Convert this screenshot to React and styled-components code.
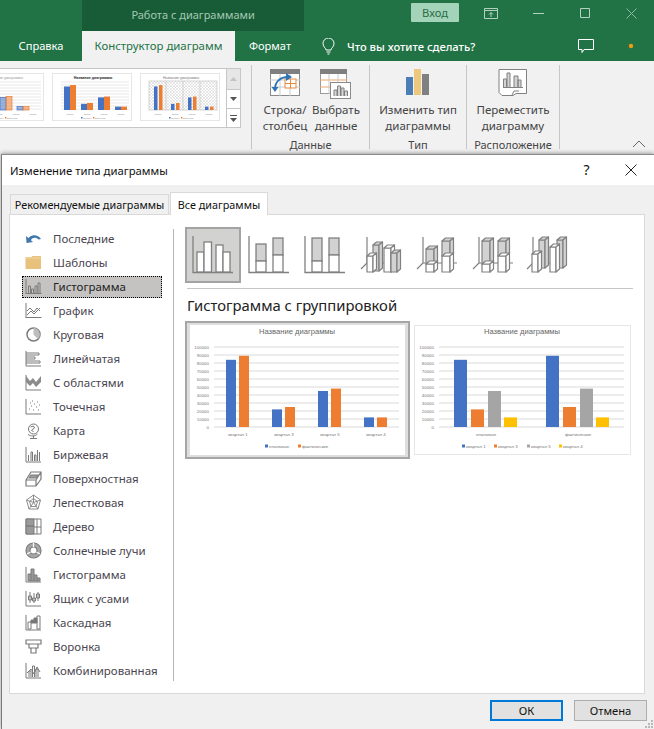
import React from 'react'
import styled, { createGlobalStyle } from 'styled-components'

const GlobalStyle = createGlobalStyle`
    html, body {
        margin: 0;
        padding: 0;
        background: #f0f0f0;
    }
    * {
        box-sizing: border-box;
    }
`

const Page = styled.div`
    width: 654px;
    height: 729px;
    overflow: hidden;
    display: flex;
    flex-direction: column;
    font-family: "Noto Sans", "Open Sans", sans-serif;
    font-size: 11.5px;
    color: #444;
`

const TitleBar = styled.div`
    height: 31px;
    flex: none;
    background: #217346;
    display: flex;
    align-items: stretch;
`

const ContextTitle = styled.div`
    width: 223px;
    margin-left: 82px;
    background: #185c37;
    color: #a5c9b4;
    font-size: 11px;
    display: flex;
    align-items: center;
    justify-content: center;
    padding-bottom: 3px;
`

const LoginButton = styled.div`
    width: 48px;
    height: 19px;
    margin: 3px 0 0 107px;
    background: #a3d3b8;
    color: #2b6b47;
    font-size: 11.200px;
    border-radius: 1px;
    display: flex;
    align-items: center;
    justify-content: center;
`

const WindowButtons = styled.div`
    display: flex;
    align-items: flex-start;
    margin-left: 20px;
`

const WindowButton = styled.div`
    width: ${p => p.$w}px;
    height: 26px;
    margin-right: ${p => p.$after || 0}px;
    display: flex;
    align-items: center;
    justify-content: center;
`

const TabRow = styled.div`
    height: 30px;
    flex: none;
    background: #217346;
    display: flex;
    align-items: stretch;
    color: #fff;
`

const RibbonTab = styled.div`
    display: flex;
    align-items: center;
    justify-content: center;
    width: ${p => p.$w}px;
    padding-bottom: 1px;
    background: ${p => (p.$active ? '#f1f1f1' : 'transparent')};
    color: ${p => (p.$active ? '#217346' : '#fff')};
    font-size: ${p => (p.$active ? 11.4 : 11.1)}px;
`

const TellMe = styled.div`
    display: flex;
    align-items: center;
    gap: 12px;
    margin-left: 17px;
    width: 230px;
    color: #fff;
    font-size: 11.200px;
    font-weight: 500;
`

const TabRight = styled.div`
    display: flex;
    align-items: center;
    gap: 35px;
    margin-left: 26px;
`

const OrangeDot = styled.span`
    width: 4px;
    height: 4px;
    border-radius: 50%;
    background: #f29b11;
    box-shadow: 0 0 1px #f29b11;
`

const Ribbon = styled.div`
    height: 93px;
    flex: none;
    background: #f1f1f1;
    display: flex;
    align-items: flex-start;
    position: relative;
`

const GalleryArea = styled.div`
    width: 251px;
    flex: none;
    padding-top: 7px;
`

const Gallery = styled.div`
    width: 241px;
    height: 60px;
    display: flex;
    background: #fff;
    border: 1px solid #c6c6c6;
    border-left: 0;
`

const ThumbStrip = styled.div`
    flex: 1;
    overflow: hidden;
    display: flex;
    gap: 8px;
    padding-top: 4px;
`

const ThumbFrame = styled.div`
    flex: none;
    width: 80px;
    height: 48px;
    margin-left: ${p => p.$shift || 0}px;
    border: 1px solid #e6e6e6;
    background: #fff;

    svg {
        display: block;
        width: 100%;
        height: 100%;
    }
`

const GalleryScroll = styled.div`
    width: 14px;
    flex: none;
    display: flex;
    flex-direction: column;
    border-left: 1px solid #c6c6c6;
`

const ScrollButton = styled.div`
    flex: ${p => p.$grow || 1};
    background: ${p => (p.$disabled ? '#e6e6e6' : '#fff')};
    border-bottom: ${p => (p.$last ? '0' : '1px solid #c6c6c6')};
    display: flex;
    align-items: center;
    justify-content: center;
`

const Group = styled.div`
    width: ${p => p.$w}px;
    height: 84px;
    margin-top: 4px;
    flex: none;
    border-left: ${p => (p.$first ? '1px solid #c6c6c6' : '0')};
    border-right: 1px solid #c6c6c6;
    display: flex;
    flex-direction: column;
    align-items: center;
`

const GroupButtons = styled.div`
    height: 72px;
    flex: none;
    display: flex;
`

const BigButton = styled.div`
    width: ${p => p.$w}px;
    display: flex;
    flex-direction: column;
    align-items: center;
    text-align: center;
    line-height: 16px;
    white-space: nowrap;
`

const BigIcon = styled.div`
    height: 37px;
    padding-top: 4px;
    flex: none;
`

const GroupLabel = styled.div`
    flex: none;
    font-size: 11px;
    line-height: 16px;
    white-space: nowrap;
`

const Collapse = styled.div`
    position: absolute;
    right: 8px;
    bottom: 6px;
    line-height: 0;
`

const Dialog = styled.div`
    flex: 1;
    margin-left: 1px;
    position: relative;
    background: #f0f0f0;
    border-left: 1px solid #7a7a7a;
    border-top: 1px solid #8a8a8a;
    box-shadow: 0 -1px 4px rgba(0, 0, 0, 0.35);
    display: flex;
    flex-direction: column;
`

const DialogHead = styled.div`
    height: 30px;
    flex: none;
    background: #fff;
    display: flex;
    align-items: center;
    padding: 0 17px 0 8px;
    color: #111;
    font-size: 11.300px;
`

const DialogTitle = styled.div`
    flex: 1;
`

const HeadButton = styled.div`
    width: 45px;
    margin-right: 16px;
    text-align: center;
    font-size: 14px;
    line-height: 1;
`

const Tabs = styled.div`
    height: 29px;
    flex: none;
    padding: 6px 0 0 8px;
    display: flex;
    align-items: flex-end;
    gap: 1px;
`

const DialogTab = styled.div`
    width: ${p => p.$w}px;
    height: ${p => (p.$active ? 23 : 21)}px;
    margin-bottom: -1px;
    background: ${p => (p.$active ? '#fff' : '#f0f0f0')};
    border: 1px solid #d9d9d9;
    border-bottom: ${p => (p.$active ? '0' : '1px solid #d9d9d9')};
    display: flex;
    align-items: center;
    justify-content: center;
    color: #111;
    font-size: 10.800px;
    white-space: nowrap;
    position: relative;
    z-index: ${p => (p.$active ? 1 : 0)};
`

const Panel = styled.div`
    width: 636px;
    height: 480px;
    flex: none;
    margin-left: 7px;
    background: #fff;
    border: 1px solid #d9d9d9;
    display: flex;
`

const Sidebar = styled.div`
    width: 164px;
    height: 452px;
    margin: 14px 0 0 0;
    flex: none;
    border-right: 1px solid #b5b5b5;
    padding: 0 11px 0 12px;
`

const TypeList = styled.div`
    margin-top: -2px;
`

const TypeRow = styled.div`
    height: 24px;
    display: flex;
    align-items: center;
    gap: 11px;
    padding-left: 3px;
    color: ${p => (p.$selected ? '#222' : '#4a4650')};
    position: relative;

    &::before {
        content: '';
        display: ${p => (p.$selected ? 'block' : 'none')};
        position: absolute;
        left: 0;
        right: 0;
        top: 1px;
        bottom: 1px;
        background: #c5c3c1;
        border: 1px dotted #000;
        outline: 1px dotted #fff;
    }

    svg, span {
        position: relative;
    }

    span {
        padding-bottom: 2px;
    }

    svg {
        margin-top: -2px;
    }
`

const Content = styled.div`
    flex: 1;
    padding: 12px 0 0 11px;
`

const VariantRow = styled.div`
    display: flex;
`

const Variant = styled.div`
    width: 56px;
    height: 56px;
    background: ${p => (p.$selected ? '#d2d2d0' : 'transparent')};
    border: 2px solid ${p => (p.$selected ? '#a3a3a3' : 'transparent')};
    line-height: 0;

    svg {
        margin: -2px;
    }
`

const Rule = styled.div`
    width: 446px;
    height: 1px;
    margin: 5px 0 0 2px;
    background: #c6c6c6;
`

const Heading = styled.div`
    margin: 6px 0 0 2px;
    font-size: 14.800px;
    line-height: 20px;
    color: #222;
`

const Previews = styled.div`
    display: flex;
    align-items: center;
    margin-top: 6px;
    gap: 4px;
`

const PreviewSelected = styled.div`
    flex: none;
    width: 225px;
    height: 138px;
    padding: 2px;
    background: #dedede;
    border: 2px solid #a6a6a6;
    display: flex;
    align-items: center;
    justify-content: center;

    svg {
        display: block;
        background: #fff;
    }
`

const Preview = styled.div`
    flex: none;
    width: 217px;
    height: 130px;
    border: 1px solid #e6e6e6;

    svg {
        display: block;
        margin: -1px;
    }
`

const DialogFoot = styled.div`
    flex: 1;
    display: flex;
    justify-content: flex-end;
    gap: 11px;
    padding: 6px 7px 0 0;
    position: relative;
`

const FootButton = styled.div`
    width: 73px;
    height: 21px;
    background: #e1e1e1;
    border: ${p => (p.$primary ? '2px solid #0078d7' : '1px solid #adadad')};
    display: flex;
    align-items: center;
    justify-content: center;
    color: #111;
    font-size: 11.200px;
`

const Grip = styled.svg`
    position: absolute;
    right: 1px;
    bottom: 1px;
`

const G = '#7b7b7b'

const icon = children => (
    <svg width="17" height="17" viewBox="0 0 17 17" fill="none" stroke={G} strokeWidth="1">
        {children}
    </svg>
)

const axes = <path d="M1 1v15M1 15.5h15.5" />

const typeIcons = {
    recent: (
        <svg width="17" height="17" viewBox="0 0 17 17" fill="none">
            <path d="M2 11 C4 4.5 12 3 16 9 L13.5 9.5 C11 7 7.5 7.5 6 10 Z" fill="#3f78b0" />
            <path d="M1 6 L1.5 13 L8 12 Z" fill="#3f78b0" />
        </svg>
    ),
    folder: (
        <svg width="17" height="17" viewBox="0 0 17 17">
            <path d="M0.5 3h6l1-1h8.500v13h-15.500z" fill="#e8c27c" />
            <path d="M0.500 4h15.500" stroke="#f1d7a5" />
        </svg>
    ),
    column: icon(<>{axes}<path d="M3.500 15V8h2v7M6.500 15V11h2v4M10 15V8h2v7M13 15V5h2v10" /></>),
    line: icon(<>{axes}<path d="M2 13l4-4 3 3 6-6M2 9l3-3 4 4 3-4 3 3" /></>),
    pie: (
        <svg width="17" height="17" viewBox="0 0 17 17" fill="none" stroke={G} strokeWidth="1.500">
            <circle cx="8.500" cy="8.500" r="6.500" />
            <path d="M8.500 8.500V2A6.500 6.500 0 0 1 13 13z" fill="#bdbdbd" stroke="none" />
        </svg>
    ),
    bar: icon(<><path d="M1 1v15h15" /><path d="M1 3h13v2H1M1 7h9v2H1M1 11h14v2H1" /></>),
    area: (
        <svg width="17" height="17" viewBox="0 0 17 17" fill="none" stroke={G}>
            <path d="M1 1v15h15" />
            <path d="M1 2l4 5 3-3 3 4 5-6v6l-5 5-3-4-3 3-4-4z" fill="#8b8b8b" stroke="none" />
        </svg>
    ),
    scatter: (
        <svg width="17" height="17" viewBox="0 0 17 17" fill="none" stroke={G}>
            <path d="M1 1v15h15" />
            <path d="M4 11h1M6 8h1M8 12h1M9 6h1M11 9h1M12 4h1M14 7h1M5 5h1M13 12h1M7 3h1" strokeWidth="1.200" />
        </svg>
    ),
    map: (
        <svg width="17" height="17" viewBox="0 0 17 17" fill="none" stroke={G}>
            <circle cx="8.500" cy="7" r="5" />
            <path d="M5.500 5l3-1 1 2-3 2 2 2M3 12.500c3 2 7 2 9.500-.5M8.500 14v2M5 16.500h7" />
        </svg>
    ),
    stock: icon(<><path d="M1 1v15h15" /><path d="M3.500 15V9M6 15V6h1.500v9M9.500 15V9h1.500v6M12.500 15V4M14.500 15V6" /></>),
    surface: (
        <svg width="17" height="17" viewBox="0 0 17 17" fill="none" stroke={G} strokeWidth="1.200">
            <path d="M1 10l5-8h10v7l-5 7H1zM1 10h10v6M11 10l5-8" />
            <path d="M4 8l2-3h7l-2 3z" fill="#9d9d9d" />
        </svg>
    ),
    radar: (
        <svg width="17" height="17" viewBox="0 0 17 17" fill="none" stroke="#8d8d8d">
            <path d="M8.500 1l7 5-2.500 9H4L1.500 6zM8.500 4.500l4 3-1.500 5H6L4.500 7.500zM8.500 1v7.500M1.500 6l7 2.500 7-2.500M4 15l4.500-6.500L13 15" />
        </svg>
    ),
    tree: (
        <svg width="17" height="17" viewBox="0 0 17 17" fill="none" stroke={G}>
            <path d="M1 1h15v15H1z" />
            <path d="M1 1h8v7H1zM1 8h8v8H1z" fill="#9a9a9a" />
            <path d="M12 1v15M9 9h7" />
        </svg>
    ),
    sun: (
        <svg width="17" height="17" viewBox="0 0 17 17" fill="none" stroke={G} strokeWidth="1.200">
            <circle cx="8.500" cy="8.500" r="7.500" fill="#a6a6a6" />
            <circle cx="8.500" cy="8.500" r="3.500" fill="#fff" />
            <path d="M8.500 1v4M2 12l3.500-2M15 12l-3.500-2" stroke="#fff" />
        </svg>
    ),
    hist: (
        <svg width="17" height="17" viewBox="0 0 17 17" fill="none" stroke={G}>
            <path d="M1 1v15h15" />
            <path d="M3 15V8h3V3h3v6h3v3h3v3z" fill="#9a9a9a" />
            <path d="M6 15V8M9 15V9M12 15v-3" />
        </svg>
    ),
    box: icon(<><path d="M1 1v15h15" /><path d="M5 2v11M3.500 6h3v4h-3zM9 3v10M7.500 8h3v3h-3zM13 2v9M11.500 4h3v4h-3z" /></>),
    fall: (
        <svg width="17" height="17" viewBox="0 0 17 17" fill="none" stroke={G}>
            <path d="M1 1v15h15" />
            <path d="M3 8h3v7H3z" />
            <path d="M6 6h3v3H6zM9 4h3v5H9z" fill="#777" />
            <path d="M12 2h3v13h-3z" />
        </svg>
    ),
    funnel: (
        <svg width="17" height="17" viewBox="0 0 17 17" fill="none" stroke={G} strokeWidth="1.200">
            <path d="M1 2h15v4H1zM4 6h9v4H4zM6 10h5v5H6z" />
        </svg>
    ),
    combo: icon(<><path d="M1 1v15h15" /><path d="M4 15V9h2v6M7.500 15V4h2v11M11 15V7h2v8" /><path d="M2 11l4-4 3 5 3-7 3 5" /></>),
}

const chartTypes = [
    ['recent', 'Последние'],
    ['folder', 'Шаблоны'],
    ['column', 'Гистограмма'],
    ['line', 'График'],
    ['pie', 'Круговая'],
    ['bar', 'Линейчатая'],
    ['area', 'С областями'],
    ['scatter', 'Точечная'],
    ['map', 'Карта'],
    ['stock', 'Биржевая'],
    ['surface', 'Поверхностная'],
    ['radar', 'Лепестковая'],
    ['tree', 'Дерево'],
    ['sun', 'Солнечные лучи'],
    ['hist', 'Гистограмма'],
    ['box', 'Ящик с усами'],
    ['fall', 'Каскадная'],
    ['funnel', 'Воронка'],
    ['combo', 'Комбинированная'],
]

const S = '#808080'

const Bar2d = ({ x, w, top, mid, fill }) => (
    <>
        {mid ? (
            <>
                <rect x={x} y={top} width={w} height={mid - top} fill="#d2d2d2" stroke={S} strokeWidth="1.300" />
                <rect x={x} y={mid} width={w} height={45 - mid} fill="#fff" stroke={S} strokeWidth="1.300" />
            </>
        ) : (
            <rect x={x} y={top} width={w} height={45 - top} fill={fill} stroke={S} strokeWidth="1.300" />
        )}
    </>
)

const Flat = ({ bars }) => (
    <svg width="56" height="56" viewBox="0 0 56 56">
        <path d="M8 9v36.500h40" fill="none" stroke={S} strokeWidth="1.300" />
        {bars.map(b => <Bar2d key={b.x} {...b} />)}
    </svg>
)

const Block = ({ x, w, top, bottom, fill }) => (
    <g stroke={S} strokeWidth="1.200" strokeLinejoin="round">
        <rect x={x} y={top} width={w} height={bottom - top} fill={fill} />
        <path d={`M${x} ${top}l3.500-3h${w}l-3.500 3z`} fill={fill} />
        <path d={`M${x + w} ${top}l3.500-3v${bottom - top}l-3.500 3z`} fill={fill} />
    </g>
)

const Stacked3d = ({ x, w, top, mid }) => (
    <>
        <Block x={x} w={w} top={top} bottom={mid} fill="#d2d2d2" />
        <Block x={x} w={w} top={mid} bottom={45} fill="#fff" />
    </>
)

const Solid = ({ children, axis = 14 }) => (
    <svg width="56" height="56" viewBox="0 0 56 56">
        <path d={`M${axis} 10v26M${axis} 36l-6 6M${axis} 36h34`} fill="none" stroke={S} strokeWidth="1.200" />
        {children}
    </svg>
)

const variants = [
    <Flat bars={[
        { x: 12, w: 7, top: 25, fill: '#fff' },
        { x: 19, w: 7.500, top: 15, fill: '#fff' },
        { x: 31, w: 7, top: 18, fill: '#fff' },
        { x: 38, w: 7, top: 25, fill: '#fff' },
    ]} />,
    <Flat bars={[{ x: 15, w: 10, top: 17, mid: 34 }, { x: 32, w: 10, top: 11, mid: 28 }]} />,
    <Flat bars={[{ x: 15, w: 10, top: 11, mid: 34 }, { x: 32, w: 10, top: 11, mid: 28 }]} />,
    <Solid>
        <Block x={20} w={6} top={18} bottom={44} fill="#d2d2d2" />
        <Block x={14} w={6} top={29} bottom={45} fill="#fff" />
        <Block x={31} w={7} top={21} bottom={45} fill="#fff" />
        <Block x={38} w={6} top={26} bottom={45} fill="#d2d2d2" />
    </Solid>,
    <Solid>
        <Stacked3d x={17} w={8} top={22} mid={37} />
        <Stacked3d x={33} w={8} top={14} mid={29} />
    </Solid>,
    <Solid>
        <Stacked3d x={17} w={8} top={14} mid={37} />
        <Stacked3d x={33} w={8} top={14} mid={29} />
    </Solid>,
    <Solid axis={12}>
        <Block x={18} w={6} top={13} bottom={41} fill="#d2d2d2" />
        <Block x={36} w={6} top={13} bottom={41} fill="#d2d2d2" />
        <Block x={11} w={6} top={27} bottom={45} fill="#fff" />
        <Block x={29} w={6} top={20} bottom={45} fill="#fff" />
    </Solid>,
]

const BLUE = '#4472c4'
const ORANGE = '#ed7d31'
const GRAY = '#a5a5a5'
const YELLOW = '#ffc000'

const ticks = [100000, 90000, 80000, 70000, 60000, 50000, 40000, 30000, 20000, 10000, 0]

const PreviewChart = ({ width, height, titleX, gridFrom, gridTo, bars, barW, cats, legend }) => (
    <svg width={width} height={height} viewBox={`0 0 ${width} ${height}`} fontFamily="Liberation Sans, sans-serif">
        <text x={titleX} y="8.500" fontSize="7.600" fill="#666" textAnchor="middle">Название диаграммы</text>
        {ticks.map((t, i) => (
            <g key={t}>
                <line x1={gridFrom} x2={gridTo} y1={22 + i * 8} y2={22 + i * 8} stroke="#dadada" strokeWidth="1" />
                <text x={gridFrom - 5} y={23.500 + i * 8} fontSize="4.400" fill="#777" textAnchor="end">{t}</text>
            </g>
        ))}
        {bars.map(([x, v, c]) => (
            <rect key={x} x={x} y={102 - v * 0.8} width={barW} height={v * 0.8} fill={c} />
        ))}
        {cats.map(([x, t]) => (
            <text key={t} x={x} y="110.500" fontSize="4.400" fill="#777" textAnchor="middle">{t}</text>
        ))}
        {legend.map(([x, t, c]) => (
            <g key={t}>
                <rect x={x} y="119.500" width="3" height="3" fill={c} />
                <text x={x + 4} y="122.800" fontSize="4.400" fill="#777">{t}</text>
            </g>
        ))}
    </svg>
)

const Thumb = ({ bars, barW, title, titleColor, bold, hatch, pale, id }) => (
    <svg viewBox="0 0 78 46" fontFamily="Liberation Sans, sans-serif">
        <defs>
            <pattern id={id} width="3" height="3" patternUnits="userSpaceOnUse">
                <path d="M0 0l3 3M3 0L0 3" stroke="#cfcfcf" strokeWidth="0.500" />
            </pattern>
        </defs>
        <text x="40" y="4.500" fontSize="3.600" fontWeight={bold ? 700 : 400} fill={titleColor} textAnchor="middle">{title}</text>
        {hatch && (
            <>
                <rect x="8" y="7" width="68" height="29" fill={`url(#${id})`} stroke="#c4c4c4" strokeWidth="0.700" />
                <path d="M25 7v29M42 7v29M59 7v29" stroke="#c4c4c4" strokeWidth="0.700" />
            </>
        )}
        {!hatch && [8, 11, 14, 17, 20, 23, 26, 29, 32, 35].map(y => (
            <line key={y} x1="8" x2="76" y1={y} y2={y} stroke="#e2e2e2" strokeWidth="0.800" />
        ))}
        {bars.map(([x, v, c]) => (
            <rect
                key={x}
                x={x}
                y={36 - v * 0.28}
                width={barW}
                height={v * 0.28}
                fill={c}
                fillOpacity={pale ? 0.55 : 1}
                stroke={pale ? c : 'none'}
                strokeWidth="0.700"
            />
        ))}
        {[17, 34, 51, 68].map(x => <text key={x} x={x} y="40.500" fontSize="1.800" fill="#888" textAnchor="middle">квартал</text>)}
        <rect x="28" y="43" width="1.500" height="1.500" fill={BLUE} />
        <rect x="40" y="43" width="1.500" height="1.500" fill={ORANGE} />
        <text x="30" y="44.500" fontSize="1.800" fill="#888">плановые</text>
        <text x="42" y="44.500" fontSize="1.800" fill="#888">фактические</text>
    </svg>
)

const pairs = (start, w) => [
    [start, 84, BLUE], [start + w, 89, ORANGE],
    [start + 17, 22, BLUE], [start + 17 + w, 25, ORANGE],
    [start + 34, 45, BLUE], [start + 34 + w, 48, ORANGE],
    [start + 51, 12, BLUE], [start + 51 + w, 12, ORANGE],
]

const Collapsed = () => (
    <svg width="14" height="8" viewBox="0 0 14 8" fill="none" stroke="#666">
        <path d="M1 7l6-6 6 6" />
    </svg>
)

const SwapIcon = () => (
    <svg width="30" height="27" viewBox="0 0 30 27" fill="none">
        <rect x="0.500" y="0.500" width="29" height="26" fill="#fff" stroke="#8a8a8a" />
        <rect x="0" y="0" width="30" height="5" fill="#7f7f7f" />
        <path d="M0 11h30M0 18h30M10 5v22M20 5v22" stroke="#c9c9c9" />
        <rect x="15" y="10" width="11" height="9" fill="#fff" stroke="#e8893c" />
        <path d="M15 14.500h11M20.500 10v9" stroke="#e8893c" />
        <path d="M5 20c0-7 5-12 13-12" stroke="#2f75b5" strokeWidth="2" />
        <path d="M16 4l6 4-6 4zM1.500 18h7l-3.500 5z" fill="#2f75b5" />
    </svg>
)

const DataIcon = () => (
    <svg width="32" height="30" viewBox="0 0 32 30" fill="none">
        <rect x="0.500" y="0.500" width="26" height="24" fill="#fff" stroke="#9a9a9a" />
        <rect x="0" y="0" width="27" height="5" fill="#7f7f7f" />
        <path d="M0 11h27M0 18h27" stroke="#e8a56d" />
        <path d="M9 5v20M18 5v20" stroke="#c9c9c9" />
        <rect x="10.500" y="13.500" width="20" height="16" fill="#fff" stroke="#8a8a8a" />
        <path d="M14 27v-6h3v6M17.500 27V17h3v10M21 27v-8h3v8M24.500 27v-5h3v5" fill="#d4d4d4" stroke="#808080" />
    </svg>
)

const TypeIcon = () => (
    <svg width="24" height="27" viewBox="0 0 24 27">
        <rect x="0" y="8" width="7" height="18" fill="#4a7eb5" />
        <rect x="8" y="0" width="7" height="26" fill="#eec77f" />
        <rect x="16" y="5" width="7" height="21" fill="#808080" />
    </svg>
)

const MoveIcon = () => (
    <svg width="30" height="27" viewBox="0 0 30 27" fill="none" stroke="#808080">
        <path d="M1 .5h27.500v24H18l-3 2H4l-3-3z" fill="#fff" />
        <path d="M5.500 18v-8h3v8M9 18V4h3v14M16 18V7h4v11M20 18v-7h3v7" fill="#d2d2d2" />
        <path d="M5 18.500h20" />
        <path d="M14 26l2-4h5" />
    </svg>
)

class App extends React.Component {
    render() {
        return (
            <Page>
                <GlobalStyle />
                <TitleBar>
                    <ContextTitle>Работа с диаграммами</ContextTitle>
                    <LoginButton>Вход</LoginButton>
                    <WindowButtons>
                        <WindowButton $w={24} $after={12}>
                            <svg width="14" height="11" viewBox="0 0 14 11" fill="none" stroke="#b5d2c1">
                                <path d="M.5.5h13v10H.5zM.5 2.500h13M7 9V4.500M5 6.500l2-2 2 2" />
                            </svg>
                        </WindowButton>
                        <WindowButton $w={46}>
                            <svg width="11" height="1" viewBox="0 0 11 1"><rect width="11" height="1" fill="#b5d2c1" /></svg>
                        </WindowButton>
                        <WindowButton $w={47}>
                            <svg width="10" height="10" viewBox="0 0 10 10" fill="none" stroke="#b5d2c1"><path d="M.5.5h9v9h-9z" /></svg>
                        </WindowButton>
                        <WindowButton $w={46}>
                            <svg width="11" height="11" viewBox="0 0 11 11" fill="none" stroke="#8fb9a1"><path d="M.5.500l10 10M10.500.500l-10 10" /></svg>
                        </WindowButton>
                    </WindowButtons>
                </TitleBar>
                <TabRow>
                    <RibbonTab $w={82}>Справка</RibbonTab>
                    <RibbonTab $w={153} $active>Конструктор диаграмм</RibbonTab>
                    <RibbonTab $w={70}>Формат</RibbonTab>
                    <TellMe>
                        <svg width="13" height="17" viewBox="0 0 13 17" fill="none" stroke="#fff">
                            <path d="M4 12c0-2-3-3-3-6.500a5.500 5.500 0 0 1 11 0C12 9 9 10 9 12zM4.500 14h4M5.500 16h2" />
                        </svg>
                        <span>Что вы хотите сделать?</span>
                    </TellMe>
                    <TabRight>
                        <svg width="16" height="15" viewBox="0 0 16 15" fill="none" stroke="#fff">
                            <path d="M.5.500h15v10H6l-2 3v-3H.5z" />
                        </svg>
                        <OrangeDot />
                    </TabRight>
                </TabRow>
                <Ribbon>
                    <GalleryArea>
                        <Gallery>
                            <ThumbStrip>
                                <ThumbFrame $shift={-36}>
                                    <Thumb id="t1" pale bars={pairs(1, 6)} barW={6} title="Название диаграммы" titleColor="#999" />
                                </ThumbFrame>
                                <ThumbFrame>
                                    <Thumb id="t2" bars={pairs(11, 6)} barW={6} title="Название диаграммы" titleColor="#222" bold />
                                </ThumbFrame>
                                <ThumbFrame>
                                    <Thumb id="t3" hatch bars={pairs(13, 5)} barW={3.500} title="Название диаграммы" titleColor="#777" />
                                </ThumbFrame>
                            </ThumbStrip>
                            <GalleryScroll>
                                <ScrollButton $grow={1.15} $disabled>
                                    <svg width="7" height="4" viewBox="0 0 7 4"><path d="M3.500 0L7 4H0z" fill="#c2c2c2" /></svg>
                                </ScrollButton>
                                <ScrollButton>
                                    <svg width="7" height="4" viewBox="0 0 7 4"><path d="M0 0h7L3.500 4z" fill="#555" /></svg>
                                </ScrollButton>
                                <ScrollButton $last>
                                    <svg width="7" height="7" viewBox="0 0 7 7"><path d="M0 0h7v1H0zM0 3h7L3.500 7z" fill="#555" /></svg>
                                </ScrollButton>
                            </GalleryScroll>
                        </Gallery>
                    </GalleryArea>
                    <Group $w={119} $first>
                        <GroupButtons>
                            <BigButton $w={51}>
                                <BigIcon><SwapIcon /></BigIcon>
                                Строка/<br />столбец
                            </BigButton>
                            <BigButton $w={51}>
                                <BigIcon><DataIcon /></BigIcon>
                                Выбрать<br />данные
                            </BigButton>
                        </GroupButtons>
                        <GroupLabel>Данные</GroupLabel>
                    </Group>
                    <Group $w={97}>
                        <GroupButtons>
                            <BigButton $w={90}>
                                <BigIcon><TypeIcon /></BigIcon>
                                Изменить тип<br />диаграммы
                            </BigButton>
                        </GroupButtons>
                        <GroupLabel>Тип</GroupLabel>
                    </Group>
                    <Group $w={93}>
                        <GroupButtons>
                            <BigButton $w={90}>
                                <BigIcon><MoveIcon /></BigIcon>
                                Переместить<br />диаграмму
                            </BigButton>
                        </GroupButtons>
                        <GroupLabel>Расположение</GroupLabel>
                    </Group>
                    <Collapse><Collapsed /></Collapse>
                </Ribbon>
                <Dialog>
                    <DialogHead>
                        <DialogTitle>Изменение типа диаграммы</DialogTitle>
                        <HeadButton>?</HeadButton>
                        <svg width="12" height="12" viewBox="0 0 12 12" fill="none" stroke="#222"><path d="M.5.500l11 11M11.500.500l-11 11" /></svg>
                    </DialogHead>
                    <Tabs>
                        <DialogTab $w={159}>Рекомендуемые диаграммы</DialogTab>
                        <DialogTab $w={98} $active>Все диаграммы</DialogTab>
                    </Tabs>
                    <Panel>
                        <Sidebar>
                            <TypeList>
                                {chartTypes.map(([key, label], i) => (
                                    <TypeRow key={i} $selected={i === 2}>
                                        {typeIcons[key]}
                                        <span>{label}</span>
                                    </TypeRow>
                                ))}
                            </TypeList>
                        </Sidebar>
                        <Content>
                            <VariantRow>
                                {variants.map((v, i) => <Variant key={i} $selected={i === 0}>{v}</Variant>)}
                            </VariantRow>
                            <Rule />
                            <Heading>Гистограмма с группировкой</Heading>
                            <Previews>
                                <PreviewSelected>
                                    <PreviewChart
                                        width={215}
                                        height={130}
                                        titleX={107}
                                        gridFrom={24}
                                        gridTo={209}
                                        barW={10}
                                        bars={[
                                            [36, 84, BLUE], [49, 89, ORANGE],
                                            [82, 22, BLUE], [95, 25, ORANGE],
                                            [128, 45, BLUE], [141, 48, ORANGE],
                                            [174, 12, BLUE], [187, 12, ORANGE],
                                        ]}
                                        cats={[[48, 'квартал 1'], [94, 'квартал 3'], [140, 'квартал 5'], [186, 'квартал 4']]}
                                        legend={[[75, 'плановые', BLUE], [108, 'фактические', ORANGE]]}
                                    />
                                </PreviewSelected>
                                <Preview>
                                    <PreviewChart
                                        width={217}
                                        height={130}
                                        titleX={108}
                                        gridFrom={25}
                                        gridTo={210}
                                        barW={13}
                                        bars={[
                                            [40, 84, BLUE], [57, 22, ORANGE], [74, 45, GRAY], [90, 12, YELLOW],
                                            [132, 89, BLUE], [149, 25, ORANGE], [166, 48, GRAY], [182, 12, YELLOW],
                                        ]}
                                        cats={[[72, 'плановые'], [164, 'фактические']]}
                                        legend={[[48, 'квартал 1', BLUE], [80, 'квартал 3', ORANGE], [113, 'квартал 5', GRAY], [145, 'квартал 4', YELLOW]]}
                                    />
                                </Preview>
                            </Previews>
                        </Content>
                    </Panel>
                    <DialogFoot>
                        <FootButton $primary>ОК</FootButton>
                        <FootButton>Отмена</FootButton>
                        <Grip width="8" height="8" viewBox="0 0 8 8" fill="#b9b9b9">
                            <path d="M6 0h2v2H6zM3 3h2v2H3zM6 3h2v2H6zM0 6h2v2H0zM3 6h2v2H3zM6 6h2v2H6z" />
                        </Grip>
                    </DialogFoot>
                </Dialog>
            </Page>
        )
    }
}

export default App
